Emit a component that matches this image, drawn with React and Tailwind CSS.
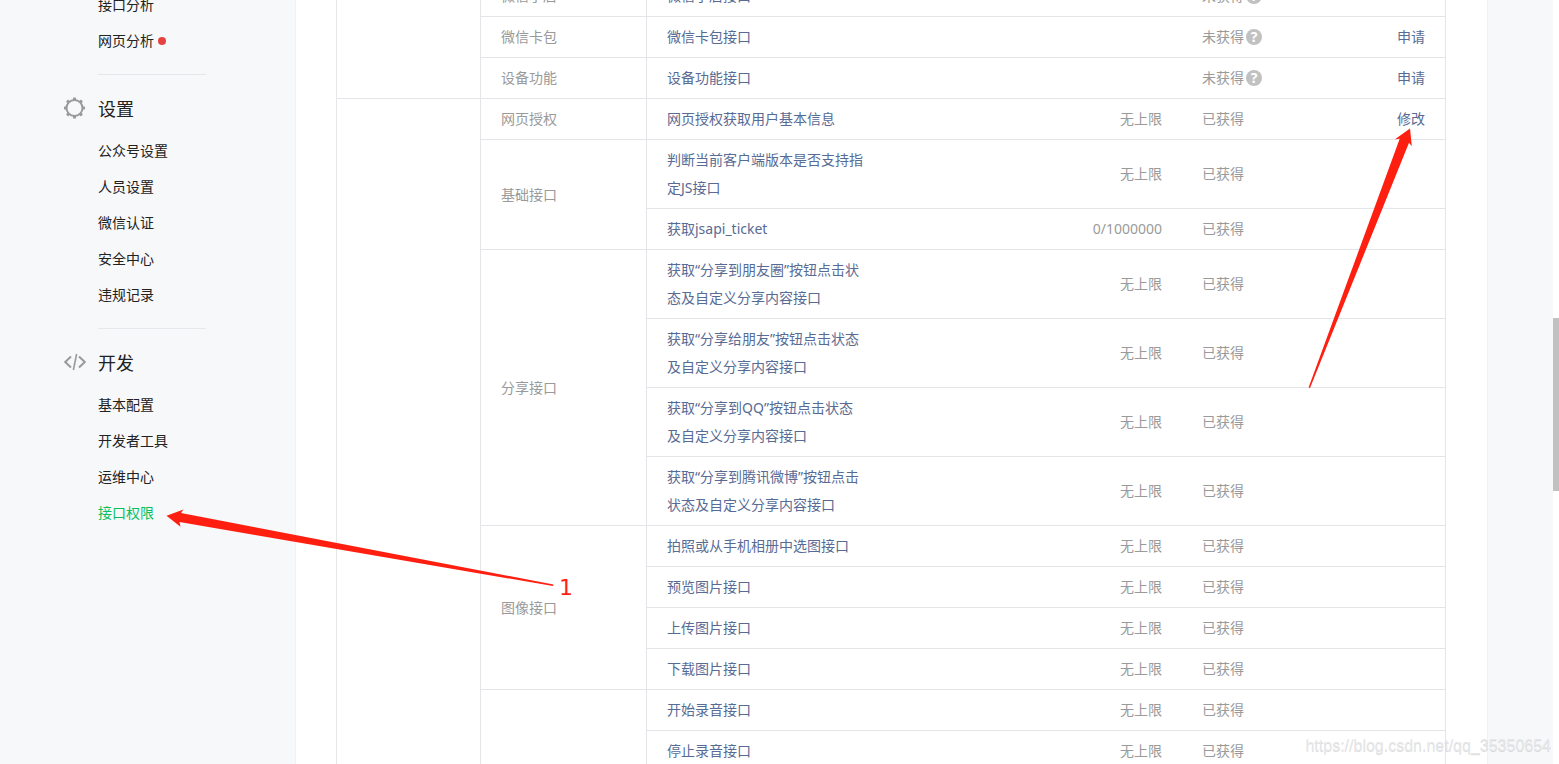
const MENU = [
  {
    items: [{ label: '接口分析' }, { label: '网页分析', dot: true }],
  },
  {
    title: '设置',
    icon: GearIcon,
    items: [
      { label: '公众号设置' },
      { label: '人员设置' },
      { label: '微信认证' },
      { label: '安全中心' },
      { label: '违规记录' },
    ],
  },
  {
    title: '开发',
    icon: CodeIcon,
    items: [
      { label: '基本配置' },
      { label: '开发者工具' },
      { label: '运维中心' },
      { label: '接口权限', active: true },
    ],
  },
];

const CATEGORIES = [
  [
    { name: '微信小店', apis: [{ name: '微信小店接口', missing: true }] },
    { name: '微信卡包', apis: [{ name: '微信卡包接口', missing: true, action: '申请' }] },
    { name: '设备功能', apis: [{ name: '设备功能接口', missing: true, action: '申请' }] },
  ],
  [
    { name: '网页授权', apis: [{ name: '网页授权获取用户基本信息', action: '修改' }] },
    {
      name: '基础接口',
      apis: [
        { name: '判断当前客户端版本是否支持指定JS接口' },
        { name: '获取jsapi_ticket', limit: '0/1000000' },
      ],
    },
    {
      name: '分享接口',
      apis: [
        { name: '获取“分享到朋友圈”按钮点击状态及自定义分享内容接口' },
        { name: '获取“分享给朋友”按钮点击状态及自定义分享内容接口' },
        { name: '获取“分享到QQ”按钮点击状态及自定义分享内容接口' },
        { name: '获取“分享到腾讯微博”按钮点击状态及自定义分享内容接口' },
      ],
    },
    {
      name: '图像接口',
      apis: [
        { name: '拍照或从手机相册中选图接口' },
        { name: '预览图片接口' },
        { name: '上传图片接口' },
        { name: '下载图片接口' },
      ],
    },
    {
      name: '',
      apis: [{ name: '开始录音接口' }, { name: '停止录音接口' }],
    },
  ],
];

function GearIcon() {
  const teeth = [0, 45, 90, 135, 180, 225, 270, 315];
  return (
    <svg viewBox="0 0 22 22" className="w-[22px] h-[25px] pb-[3px]" fill="#9a9a9a" aria-hidden="true">
      <circle cx="10.5" cy="11" r="8" fill="none" stroke="#9a9a9a" strokeWidth="2" />
      {teeth.map((angle) => (
        <rect key={angle} x="9" y="0.5" width="3" height="3" rx="0.5" transform={`rotate(${angle} 10.5 11)`} />
      ))}
    </svg>
  );
}

function CodeIcon() {
  return (
    <svg viewBox="0 0 22 22" className="w-[22px] h-[25px] pb-[3px]" fill="none" stroke="#9a9a9a" strokeWidth="2" aria-hidden="true">
      <path d="M7 5.5 1.2 11 7 16.5" />
      <path d="M15 5.5 20.8 11 15 16.5" />
      <path d="M12.6 3 9.4 19" strokeWidth="1.6" />
    </svg>
  );
}

function Sidebar() {
  return (
    <nav className="w-[295px] shrink-0 -mt-[13px] pl-16">
      {MENU.map((group, i) => (
        <div key={i} className="group">
          {group.title && (
            <h2 className="flex items-center gap-3 pt-4 pb-1.5 text-lg leading-9 text-[#222]">
              <group.icon />
              {group.title}
            </h2>
          )}
          <ul className="ml-[34px] w-[108px] pb-[15px] border-b border-[#e4e8eb] group-last:border-b-0">
            {group.items.map((item) => (
              <li key={item.label} className="flex items-center h-9">
                <a href="#" className={item.active ? 'text-[#07c160]' : 'text-[#222]'}>
                  {item.label}
                </a>
                {item.dot && <span className="ml-1 size-2 rounded-full bg-[#e64340]" />}
              </li>
            ))}
          </ul>
        </div>
      ))}
    </nav>
  );
}

function ApiTable() {
  return (
    <table className="w-full table-fixed border-separate border-spacing-0 border-l border-[#e4e8eb] leading-7 text-[#9a9a9a]">
      <colgroup>
        <col className="w-36" />
        <col className="w-[166px]" />
        <col />
        <col className="w-40" />
        <col className="w-[120px]" />
        <col className="w-36" />
      </colgroup>
      <tbody>
        {CATEGORIES.map((groups, c) => {
          const total = groups.reduce((sum, group) => sum + group.apis.length, 0);
          return groups.map((group, g) =>
            group.apis.map((api, a) => (
              <tr key={`${c}-${g}-${a}`}>
                {g === 0 && a === 0 && <td rowSpan={total} className="border-r border-b border-[#e4e5e9]" />}
                {a === 0 && (
                  <td rowSpan={group.apis.length} className="px-5 py-1.5 border-r border-b border-[#e4e5e9]">
                    {group.name}
                  </td>
                )}
                <td className="px-5 py-1.5 border-b border-[#e4e5e9]">
                  <a href="#" className="block max-w-[198px] text-[#576b95]">
                    {api.name}
                  </a>
                </td>
                <td className="px-5 py-1.5 text-right border-b border-[#e4e5e9]">
                  {!api.missing && (api.limit || '无上限')}
                </td>
                <td className="pl-5 py-1.5 border-b border-[#e4e5e9]">
                  <div className="flex items-center gap-0.5">
                    {api.missing ? '未获得' : '已获得'}
                    {api.missing && (
                      <button
                        type="button"
                        className="flex items-center justify-center size-4 rounded-full bg-[#c1c1c1] text-sm font-bold text-white"
                      >
                        ?
                      </button>
                    )}
                  </div>
                </td>
                <td className="px-5 py-1.5 text-right border-r border-b border-[#e4e5e9]">
                  {api.action && (
                    <a href="#" className="text-[#576b95]">
                      {api.action}
                    </a>
                  )}
                </td>
              </tr>
            ))
          );
        })}
      </tbody>
    </table>
  );
}

function Annotations() {
  return (
    <svg className="absolute inset-0 size-full pointer-events-none" fill="#ff1f10">
      <polygon points="166.5,515.7 183.5,509.5 181,513 255,527.2 553.5,584.6 553,586 255,535 179.5,522 180.5,526.7" />
      <polygon points="1410,128.5 1395,139.2 1399.7,138.8 1308.6,387.5 1310,388 1409,142.8 1411.8,146.2" />
      <text x="559" y="595" className="text-[22px] font-['DejaVu_Sans',sans-serif]">
        1
      </text>
    </svg>
  );
}

export default function App() {
  return (
    <div className="relative flex h-screen overflow-hidden bg-[#f6f8fa] text-sm font-['Noto_Sans','Noto_Sans_CJK_SC',sans-serif]">
      <Sidebar />
      <main className="flex-1 min-w-0 mr-[65px] pl-10 pr-[41px] bg-white border-x border-[#eff1f3]">
        <div className="-mt-6">
          <ApiTable />
        </div>
      </main>
      <div className="w-1.5 shrink-0 bg-white pt-[318px]">
        <div className="h-[173px] bg-[#c1c1c1]" />
      </div>
      <Annotations />
      <p className="absolute right-2 bottom-1.5 text-base leading-6 text-[#e6e7e9] text-shadow-2xs font-['Liberation_Sans',sans-serif]">
        https://blog.csdn.net/qq_35350654
      </p>
    </div>
  );
}
